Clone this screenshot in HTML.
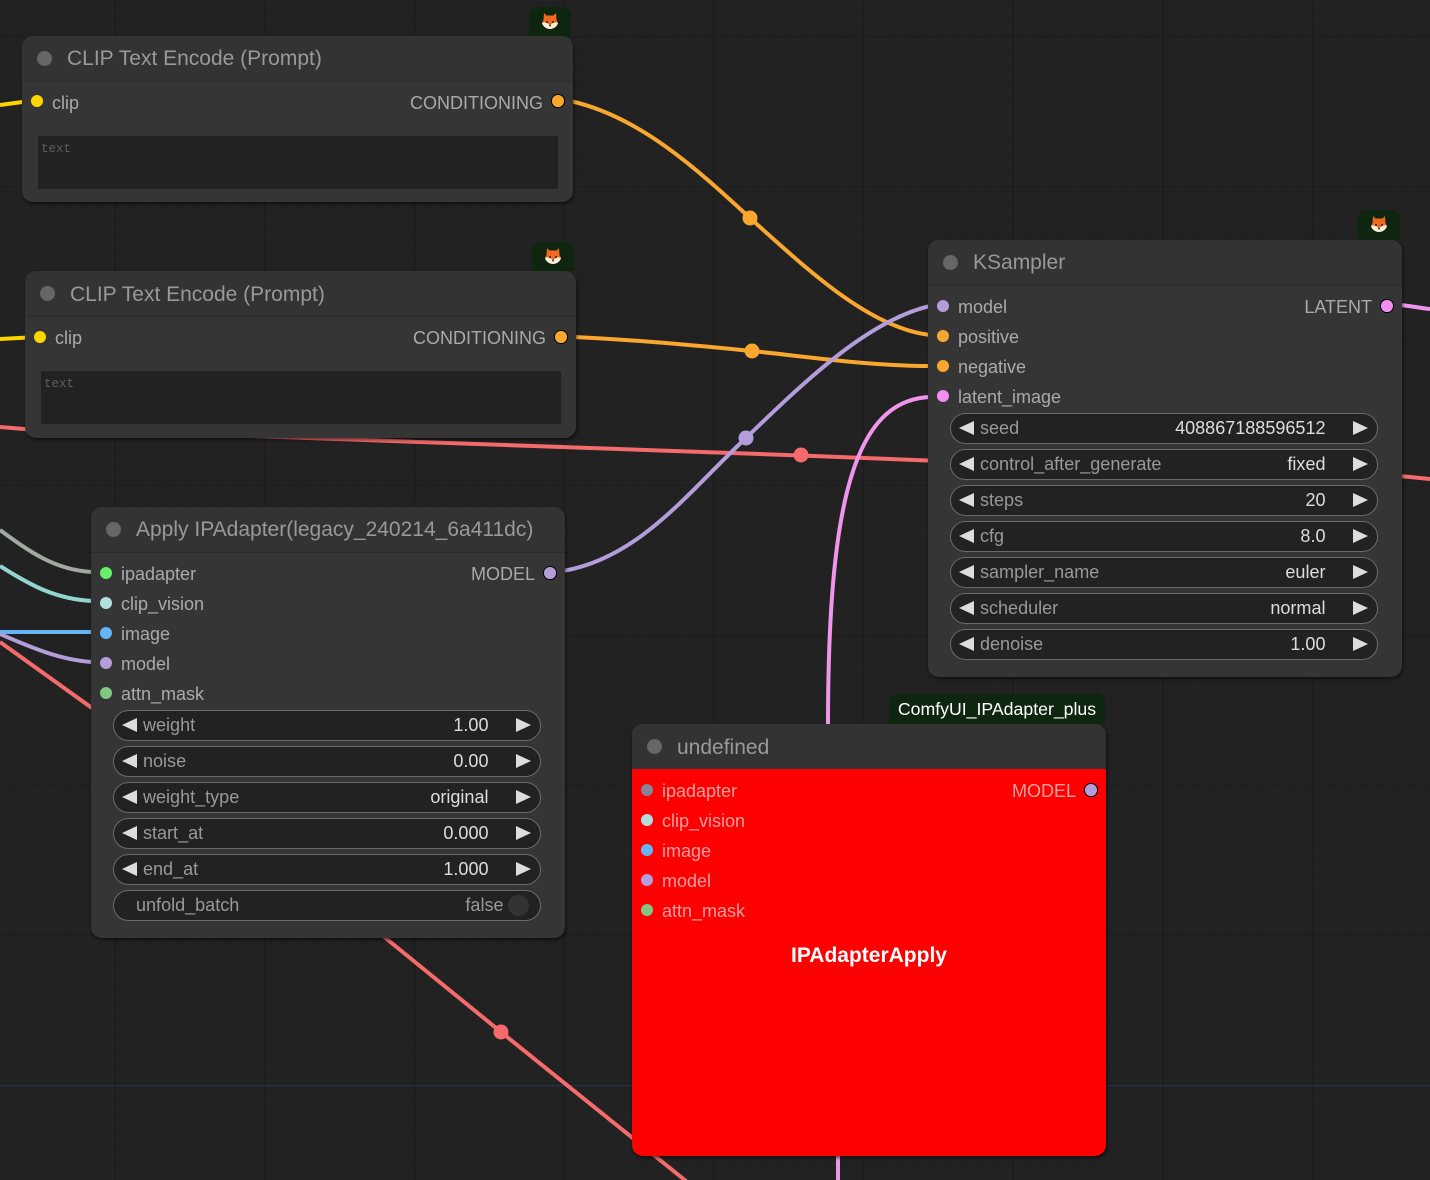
<!DOCTYPE html>
<html><head><meta charset="utf-8"><style>
html,body{margin:0;padding:0;background:#222}
#r{position:relative;width:1430px;height:1180px;overflow:hidden;background-color:#222;font-family:"Liberation Sans",sans-serif;
background-image:linear-gradient(90deg,rgba(0,0,0,.11) 2px,transparent 2px),linear-gradient(rgba(0,0,0,.06) 2px,transparent 2px),linear-gradient(90deg,rgba(0,0,0,.06) 1px,transparent 1px),linear-gradient(rgba(0,0,0,.06) 1px,transparent 1px);
background-size:149.7px 149.7px,149.7px 149.7px,16.63px 16.63px,16.63px 16.63px;background-position:114px 0,0 36px,15px 0,0 3px}
svg.l{position:absolute;left:0;top:0}
.n{position:absolute;background:#353535;border-radius:11px;box-shadow:1px 2px 3px rgba(0,0,0,.55);width:474px}
.h{position:absolute;left:0;top:0;right:0;height:45px;background:#333;border-radius:11px 11px 0 0;border-bottom:1px solid #2c2c2c;box-sizing:content-box}
.t{position:absolute;left:45px;top:10px;line-height:25px;font-size:21px;color:#999;white-space:nowrap}
.b{position:absolute;left:15px;top:15px;width:15px;height:15px;border-radius:50%;background:#666}
.d{position:absolute;width:12.5px;height:12.5px;border-radius:50%;margin:-.5px 0 0 -.5px}
.o{box-sizing:border-box;width:13.5px;height:13.5px;border:1.5px solid #000;margin:0}
.s{position:absolute;font-size:18px;line-height:24px;color:#aaa;white-space:nowrap}
.w{position:absolute;left:22px;width:428px;height:31px;box-sizing:border-box;background:#222;border:1.5px solid #6a6a6a;border-radius:16px}
.w i{position:absolute;top:7px;width:0;height:0;border-top:7.5px solid transparent;border-bottom:7.5px solid transparent}
.w .a{left:7.5px;border-right:15px solid #ddd}
.w .c{right:9.5px;border-left:15px solid #ddd}
.w .k{position:absolute;left:29px;top:1.5px;font-size:18.05px;line-height:25px;color:#999;white-space:nowrap}
.w .v{position:absolute;right:51.5px;top:1.5px;font-size:18.05px;line-height:25px;color:#ddd;white-space:nowrap}
.ta{position:absolute;background:#222;width:520px;height:53px;box-sizing:border-box;font:12.5px/13px "Liberation Mono",monospace;color:#5e5e5e;padding:7px 3px}
.g{position:absolute;background:#0e2510;border-radius:8px 8px 0 0}
.g svg{position:absolute;left:11px;top:5px}
</style></head><body><div id="r">
<svg class="l" width="1430" height="1180" fill="none" stroke-width="4" stroke-linecap="butt">
<path d="M0 1085.500H1430" stroke="#27304a" stroke-width="1.500"/>
<path d="M0 427L30 429.500 250 436 801 455.500 928 460.500" stroke="#f56a6a" stroke-width="4"/>
<path d="M1400 476L1430 479" stroke="#f56a6a" stroke-width="4"/>
<path d="M0 105L26 101.500" stroke="#ffd500"/>
<path d="M0 339L28 337.500" stroke="#ffd500"/>
<path d="M570 101C640 116 700 172 750 218C810 272 870 328 930 335" stroke="#f9a72f"/>
<path d="M574 337C640 340 700 346 752 351C810 357 870 366 930 366" stroke="#f9a72f"/>
<path d="M563 571C640 558 690 490 746 438C810 376 870 320 930 306" stroke="#b39ddb"/>
<path d="M930 397C855 400 828 500 828 726" stroke="#f095ec"/>
<path d="M838 1150V1180" stroke="#f095ec"/>
<path d="M1400 305C1412 306 1420 308 1430 309" stroke="#f095ec"/>
<path d="M0 530C30 552 55 570 92 572" stroke="#a1a9a0"/>
<path d="M0 566C30 585 55 599 92 601" stroke="#92d5d0"/>
<path d="M0 632H92" stroke="#64b5f6"/>
<path d="M0 634C30 647 60 660 92 662" stroke="#b39ddb"/>
<path d="M0 642L92 708" stroke="#f56a6a"/>
<path d="M383 936L501 1032 686 1181" stroke="#f56a6a"/>
<circle cx="750" cy="218" r="7.500" fill="#f9a72f"/>
<circle cx="752" cy="351" r="7.500" fill="#f9a72f"/>
<circle cx="746" cy="438" r="7.500" fill="#b39ddb"/>
<circle cx="801" cy="455" r="7.500" fill="#f56a6a"/>
<circle cx="501" cy="1032" r="7.500" fill="#f56a6a"/>
</svg>

<div class="g" style="left:529px;top:7px;width:42px;height:29px"><svg width="20" height="18" viewBox="0 0 20 18"><path d="M4 1L6.500 3.500H13.500L16 1 16.500 8 18 11C17 15 13 17 10 17 7 17 3 15 2 11L3.500 8Z" fill="#f0691f"/><path d="M2 11C5 9.500 7 11 10 13 13 11 15 9.500 18 11 17 15 13 17 10 17 7 17 3 15 2 11Z" fill="#fbeedd"/><circle cx="7" cy="10" r="1" fill="#222"/><circle cx="13" cy="10" r="1" fill="#222"/><circle cx="10" cy="13.500" r="1" fill="#432"/></svg></div>
<div class="g" style="left:532px;top:242px;width:42px;height:29px"><svg width="20" height="18" viewBox="0 0 20 18"><path d="M4 1L6.500 3.500H13.500L16 1 16.500 8 18 11C17 15 13 17 10 17 7 17 3 15 2 11L3.500 8Z" fill="#f0691f"/><path d="M2 11C5 9.500 7 11 10 13 13 11 15 9.500 18 11 17 15 13 17 10 17 7 17 3 15 2 11Z" fill="#fbeedd"/><circle cx="7" cy="10" r="1" fill="#222"/><circle cx="13" cy="10" r="1" fill="#222"/><circle cx="10" cy="13.500" r="1" fill="#432"/></svg></div>
<div class="g" style="left:1358px;top:210px;width:42px;height:30px"><svg width="20" height="18" viewBox="0 0 20 18"><path d="M4 1L6.500 3.500H13.500L16 1 16.500 8 18 11C17 15 13 17 10 17 7 17 3 15 2 11L3.500 8Z" fill="#f0691f"/><path d="M2 11C5 9.500 7 11 10 13 13 11 15 9.500 18 11 17 15 13 17 10 17 7 17 3 15 2 11Z" fill="#fbeedd"/><circle cx="7" cy="10" r="1" fill="#222"/><circle cx="13" cy="10" r="1" fill="#222"/><circle cx="10" cy="13.500" r="1" fill="#432"/></svg></div>
<div class="g" style="left:889px;top:694px;width:216px;height:30px;color:#fff;font-size:17.7px;line-height:30px;text-align:center;white-space:nowrap">ComfyUI_IPAdapter_plus</div>

<!-- Node 1 -->
<div class="n" style="left:22px;top:36px;width:551px;height:166px">
<div class="h"><div class="b"></div><div class="t">CLIP Text Encode (Prompt)</div></div>
<div class="d" style="left:9px;top:59px;background:#ffd500"></div><div class="s" style="left:30px;top:55px">clip</div>
<div class="s" style="right:30px;top:55px">CONDITIONING</div><div class="d o" style="left:529px;top:58px;background:#f9a72f"></div>
<div class="ta" style="left:16px;top:100px">text</div>
</div>

<!-- Node 2 -->
<div class="n" style="left:25px;top:271px;width:551px;height:167px">
<div class="h"><div class="b"></div><div class="t" style="top:11px">CLIP Text Encode (Prompt)</div></div>
<div class="d" style="left:9px;top:60px;background:#ffd500"></div><div class="s" style="left:30px;top:55px">clip</div>
<div class="s" style="right:30px;top:55px">CONDITIONING</div><div class="d o" style="left:529px;top:59px;background:#f9a72f"></div>
<div class="ta" style="left:16px;top:100px">text</div>
</div>

<!-- Apply IPAdapter -->
<div class="n" style="left:91px;top:507px;height:431px">
<div class="h"><div class="b"></div><div class="t">Apply IPAdapter(legacy_240214_6a411dc)</div></div>
<div class="d" style="left:9px;top:60px;background:#69f06b"></div><div class="s" style="left:30px;top:55px">ipadapter</div>
<div class="d" style="left:9px;top:90px;background:#b2dfdb"></div><div class="s" style="left:30px;top:85px">clip_vision</div>
<div class="d" style="left:9px;top:120px;background:#64b5f6"></div><div class="s" style="left:30px;top:115px">image</div>
<div class="d" style="left:9px;top:150px;background:#b39ddb"></div><div class="s" style="left:30px;top:145px">model</div>
<div class="d" style="left:9px;top:180px;background:#81c784"></div><div class="s" style="left:30px;top:175px">attn_mask</div>
<div class="s" style="right:30px;top:55px">MODEL</div><div class="d o" style="left:452px;top:59px;background:#b39ddb"></div>
<div class="w" style="top:203px"><i class="a"></i><span class="k">weight</span><span class="v">1.00</span><i class="c"></i></div>
<div class="w" style="top:239px"><i class="a"></i><span class="k">noise</span><span class="v">0.00</span><i class="c"></i></div>
<div class="w" style="top:275px"><i class="a"></i><span class="k">weight_type</span><span class="v">original</span><i class="c"></i></div>
<div class="w" style="top:311px"><i class="a"></i><span class="k">start_at</span><span class="v">0.000</span><i class="c"></i></div>
<div class="w" style="top:347px"><i class="a"></i><span class="k">end_at</span><span class="v">1.000</span><i class="c"></i></div>
<div class="w" style="top:383px"><span class="k" style="left:22px">unfold_batch</span><span class="v" style="right:36.5px;color:#999">false</span><div style="position:absolute;right:11px;top:3.5px;width:21px;height:21px;border-radius:50%;background:#333"></div></div>
</div>

<!-- KSampler -->
<div class="n" style="left:928px;top:240px;height:437px">
<div class="h"><div class="b"></div><div class="t">KSampler</div></div>
<div class="d" style="left:9px;top:60px;background:#b39ddb"></div><div class="s" style="left:30px;top:55px">model</div>
<div class="d" style="left:9px;top:90px;background:#f9a72f"></div><div class="s" style="left:30px;top:85px">positive</div>
<div class="d" style="left:9px;top:120px;background:#f9a72f"></div><div class="s" style="left:30px;top:115px">negative</div>
<div class="d" style="left:9px;top:150px;background:#f38df0"></div><div class="s" style="left:30px;top:145px">latent_image</div>
<div class="s" style="right:30px;top:55px">LATENT</div><div class="d o" style="left:452px;top:59px;background:#f38df0"></div>
<div class="w" style="top:173px"><i class="a"></i><span class="k">seed</span><span class="v">408867188596512</span><i class="c"></i></div>
<div class="w" style="top:209px"><i class="a"></i><span class="k">control_after_generate</span><span class="v">fixed</span><i class="c"></i></div>
<div class="w" style="top:245px"><i class="a"></i><span class="k">steps</span><span class="v">20</span><i class="c"></i></div>
<div class="w" style="top:281px"><i class="a"></i><span class="k">cfg</span><span class="v">8.0</span><i class="c"></i></div>
<div class="w" style="top:317px"><i class="a"></i><span class="k">sampler_name</span><span class="v">euler</span><i class="c"></i></div>
<div class="w" style="top:353px"><i class="a"></i><span class="k">scheduler</span><span class="v">normal</span><i class="c"></i></div>
<div class="w" style="top:389px"><i class="a"></i><span class="k">denoise</span><span class="v">1.00</span><i class="c"></i></div>
</div>

<!-- undefined -->
<div class="n" style="left:632px;top:724px;height:432px;background:#f00">
<div class="h" style="border-bottom:0"><div class="b"></div><div class="t" style="top:11px">undefined</div></div>
<div class="d" style="left:9px;top:60px;background:#858599"></div><div class="s" style="left:30px;top:55px;color:#f0a0a0">ipadapter</div>
<div class="d" style="left:9px;top:90px;background:#b2dfdb"></div><div class="s" style="left:30px;top:85px;color:#f0a0a0">clip_vision</div>
<div class="d" style="left:9px;top:120px;background:#64b5f6"></div><div class="s" style="left:30px;top:115px;color:#f0a0a0">image</div>
<div class="d" style="left:9px;top:150px;background:#b39ddb"></div><div class="s" style="left:30px;top:145px;color:#f0a0a0">model</div>
<div class="d" style="left:9px;top:180px;background:#81c784"></div><div class="s" style="left:30px;top:175px;color:#f0a0a0">attn_mask</div>
<div class="s" style="right:30px;top:55px;color:#f0a0a0">MODEL</div><div class="d o" style="left:452px;top:59px;background:#b39ddb"></div>
<div style="position:absolute;left:0;right:0;top:218px;text-align:center;color:#fff;font-weight:bold;font-size:21px;line-height:28px;white-space:nowrap">IPAdapterApply</div>
</div>
</div></body></html>
